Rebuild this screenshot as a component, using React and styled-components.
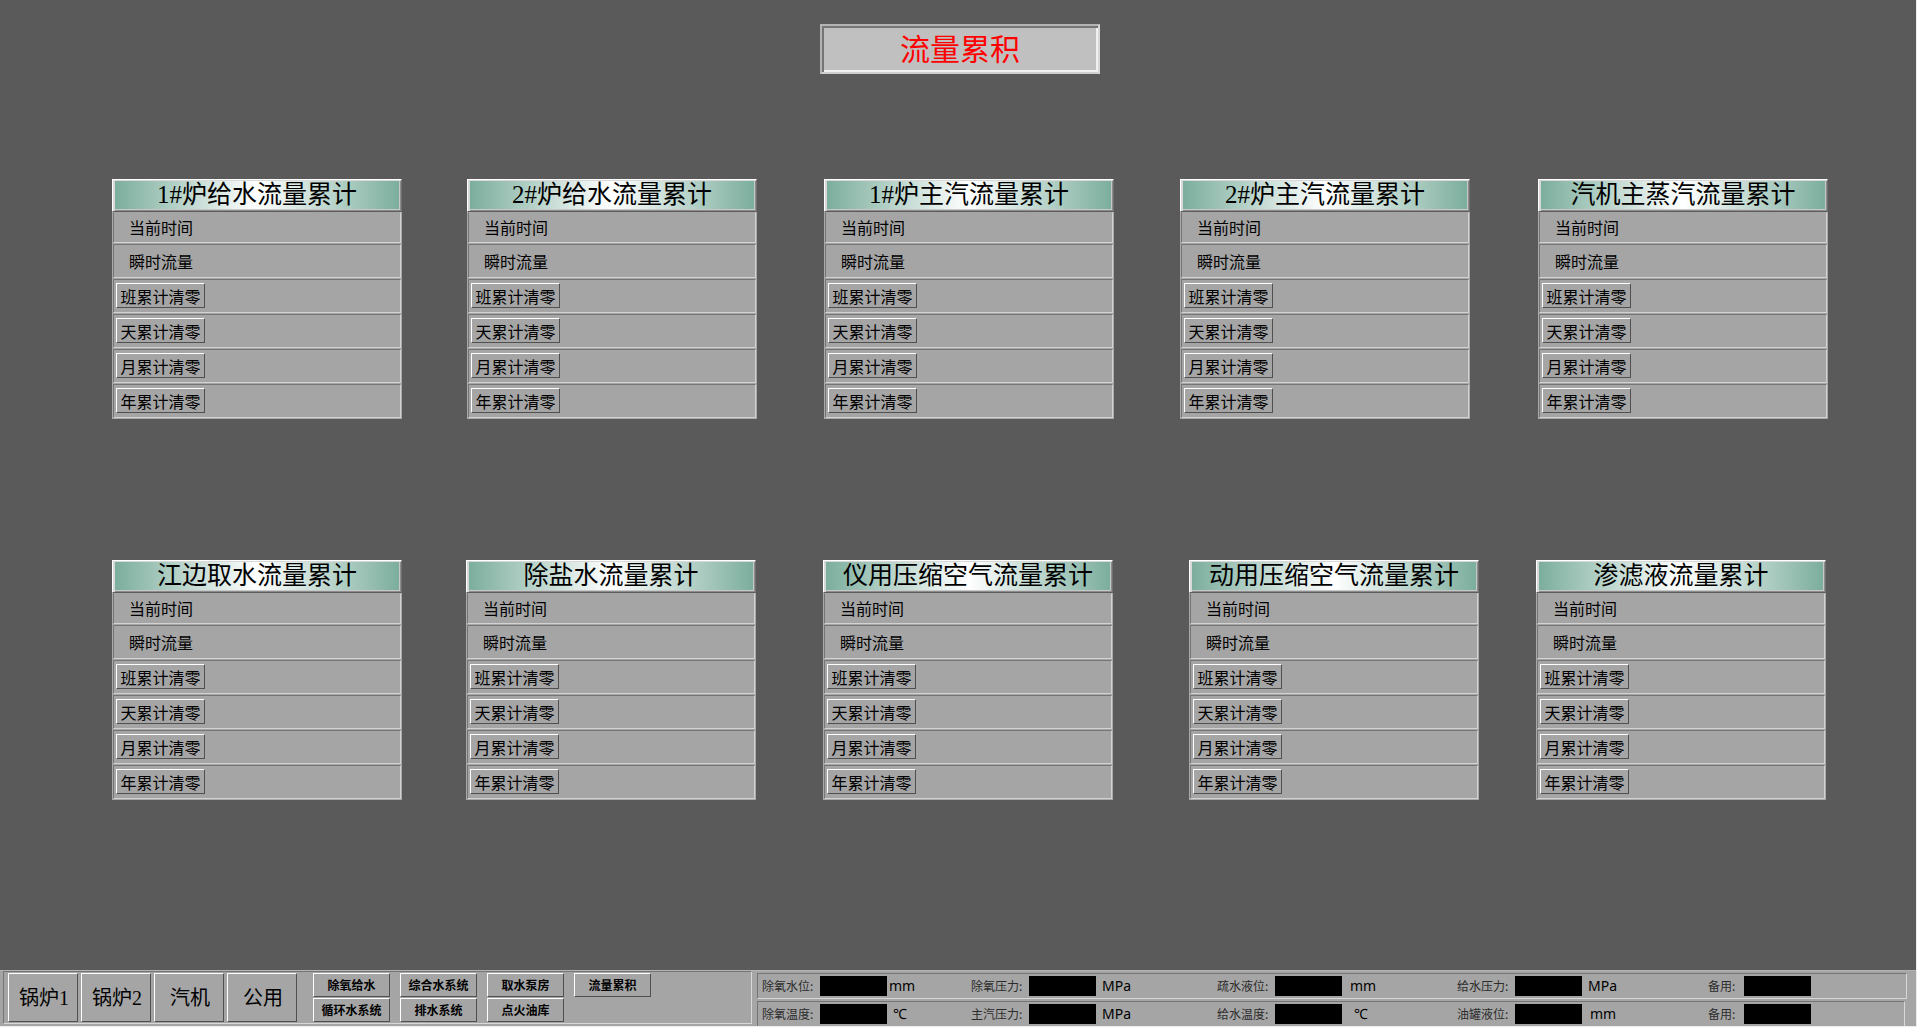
import React from "react";
import styled, { createGlobalStyle } from "styled-components";

const SANS = `"Noto Sans CJK SC", "Noto Sans", sans-serif`;
const SERIF = `"Liberation Serif", "Noto Sans CJK SC", serif`;

const GlobalStyle = createGlobalStyle`
  * { box-sizing: border-box; }
  body { margin: 0; background: #5a5a5a; }
  button { padding: 0; cursor: pointer; color: #000; border-radius: 0; }
`;

const Page = styled.div`
  min-height: 100vh;
  display: flex;
  flex-direction: column;
  background: #5a5a5a;
  border: solid #ececec;
  border-width: 0 1px 1px 0;
  color: #000;
  font-family: ${SANS};
`;

const Main = styled.main`
  flex: 1;
  display: flex;
  flex-direction: column;
  padding-top: 24px;
`;

const PageTitle = styled.h1`
  align-self: center;
  width: 280px;
  height: 50px;
  margin: 0 0 105px 4px;
  border: 2px solid;
  border-color: #b4b4b4 #d8d8d8 #d0d0d0 #b4b4b4;
  box-shadow: inset 2px 2px 0 #757575, inset -2px -2px 0 #f0f0f0;
  background: #c0c0c0;
  color: #f00;
  font: 400 30px/48px ${SERIF};
  text-align: center;
`;

const PanelRow = styled.section`
  display: flex;
  padding: 0 ${(p) => p.$right}px 0 112px;
  margin-bottom: 141px;
`;

const Panel = styled.article`
  flex: 1 1 290px;
  margin-left: ${(p) => p.$gap}px;
  background: #a5a5a5;
  border-right: 1px solid #a9a9a9;
  border-left: 1px solid #a9a9a9;
  border-bottom: 1px solid #a9a9a9;
`;

const PanelTitle = styled.h2`
  height: 33px;
  margin: 0 -1px;
  border: 1px solid;
  border-color: #fff #707070 #5c5c5c #fff;
  box-shadow: inset 2px 1px 0 #d8d8d8, inset -1px -1px 0 #8c8c8c,
    inset -2px -2px 0 #c8c8c8;
  background: linear-gradient(90deg, #7aad9b 0%, #fff 50%, #7aad9b 100%);
  font: 400 25px/29px ${SERIF};
  text-align: center;
  white-space: nowrap;
`;

const Row = styled.div`
  height: ${(p) => (p.$first ? 31 : 34)}px;
  margin-bottom: 1px;
  border: 1px solid;
  border-color: ${(p) => (p.$first ? "#a5a5a5" : "#757575")} #d2d2d2 #d2d2d2 #757575;
  display: flex;
  align-items: center;
  padding: 0 0 1px ${(p) => (p.$label ? 15 : 2)}px;
  font-size: 16px;
  line-height: 24px;
  &:last-child { margin-bottom: 0; }
`;

const RaisedButton = styled.button`
  border: 1px solid;
  border-color: #fff #505050 #505050 #fff;
  background: #a5a5a5;
`;

const ResetButton = styled(RaisedButton)`
  width: 89px;
  height: 25px;
  font: 400 16px/22px ${SANS};
`;

const Footer = styled.footer`
  display: flex;
  gap: 5px;
  height: 56px;
  padding-left: 3px;
  background: #a5a5a5;
  border-top: 1px solid #b4b4b4;
`;

const Nav = styled.nav`
  flex: 0 0 749px;
  height: 53px;
  display: flex;
  padding: 1px 0 0 4px;
  border: 1px solid;
  border-color: #757575 #d8d8d8 #d8d8d8 #757575;
`;

const MainLinks = styled.div`
  display: flex;
  gap: 3px;
  margin-right: 16px;
`;

const NavButton = styled(RaisedButton)`
  width: 70px;
  height: 49px;
  padding-left: 2px;
  font: 400 20px/28px ${SERIF};
`;

const SubLinks = styled.div`
  display: grid;
  grid-template-columns: repeat(4, 77px);
  grid-auto-rows: 24px;
  gap: 1px 10px;
`;

const SubButton = styled(RaisedButton)`
  font: 700 12px/20px ${SANS};
`;

const Readings = styled.div`
  flex: 1;
  display: flex;
  flex-direction: column;
  gap: 2px;
  padding: 2px 9px 0 0;
`;

const ReadingRow = styled.div`
  display: grid;
  grid-template-columns: 209fr 246fr 240fr 251fr 196fr;
  align-items: center;
  height: ${(p) => (p.$open ? 25 : 27)}px;
  padding: 0 ${(p) => (p.$open ? 0 : 2)}px 0 4px;
  margin-right: ${(p) => (p.$open ? 2 : 0)}px;
  border: 1px solid;
  border-color: #757575 #d8d8d8 #d8d8d8 #757575;
  border-bottom-width: ${(p) => (p.$open ? 0 : 1)}px;
`;

const Reading = styled.div`
  display: flex;
  align-items: center;
`;

const ReadingLabel = styled.label`
  width: ${(p) => (p.$short ? 36 : 58)}px;
  color: #2c2c2c;
  font-size: 12px;
  line-height: 20px;
  white-space: nowrap;
`;

const ReadingValue = styled.output`
  width: 67px;
  height: 20px;
  background: #000;
`;

const Unit = styled.span`
  margin-left: ${(p) => p.$gap}px;
  font: 400 14px/20px "Noto Sans", "Noto Sans CJK SC", sans-serif;
`;

const panelRows = [
  {
    right: 88,
    panels: [
      ["1#炉给水流量累计", 0],
      ["2#炉给水流量累计", 65],
      ["1#炉主汽流量累计", 67],
      ["2#炉主汽流量累计", 66],
      ["汽机主蒸汽流量累计", 68],
    ],
  },
  {
    right: 90,
    panels: [
      ["江边取水流量累计", 0],
      ["除盐水流量累计", 64],
      ["仪用压缩空气流量累计", 67],
      ["动用压缩空气流量累计", 76],
      ["渗滤液流量累计", 57],
    ],
  },
];

const resets = ["班累计清零", "天累计清零", "月累计清零", "年累计清零"];
const mainLinks = ["锅炉1", "锅炉2", "汽机", "公用"];
const subLinks = [
  "除氧给水", "综合水系统", "取水泵房", "流量累积",
  "循环水系统", "排水系统", "点火油库",
];

const readings = [
  [
    ["除氧水位:", "mm", 2],
    ["除氧压力:", "MPa", 6],
    ["疏水液位:", "mm", 8],
    ["给水压力:", "MPa", 6],
    ["备用:"],
  ],
  [
    ["除氧温度:", "℃", 6],
    ["主汽压力:", "MPa", 6],
    ["给水温度:", "℃", 12],
    ["油罐液位:", "mm", 8],
    ["备用:"],
  ],
];

function FlowPanel({ title, gap }) {
  return (
    <Panel $gap={gap}>
      <PanelTitle>{title}</PanelTitle>
      <Row $first $label>当前时间</Row>
      <Row $label>瞬时流量</Row>
      {resets.map((text) => (
        <Row key={text}>
          <ResetButton type="button">{text}</ResetButton>
        </Row>
      ))}
    </Panel>
  );
}

export default function App() {
  return (
    <Page>
      <GlobalStyle />
      <Main>
        <PageTitle>流量累积</PageTitle>
        {panelRows.map(({ right, panels }) => (
          <PanelRow key={right} $right={right}>
            {panels.map(([title, gap]) => (
              <FlowPanel key={title} title={title} gap={gap} />
            ))}
          </PanelRow>
        ))}
      </Main>
      <Footer>
        <Nav>
          <MainLinks>
            {mainLinks.map((text) => (
              <NavButton key={text} type="button">{text}</NavButton>
            ))}
          </MainLinks>
          <SubLinks>
            {subLinks.map((text) => (
              <SubButton key={text} type="button">{text}</SubButton>
            ))}
          </SubLinks>
        </Nav>
        <Readings>
          {readings.map((row, r) => (
            <ReadingRow key={r} $open={r === 1}>
              {row.map(([label, unit, gap], c) => (
                <Reading key={c}>
                  <ReadingLabel htmlFor={`reading-${r}-${c}`} $short={!unit}>
                    {label}
                  </ReadingLabel>
                  <ReadingValue id={`reading-${r}-${c}`} />
                  {unit && <Unit $gap={gap}>{unit}</Unit>}
                </Reading>
              ))}
            </ReadingRow>
          ))}
        </Readings>
      </Footer>
    </Page>
  );
}
